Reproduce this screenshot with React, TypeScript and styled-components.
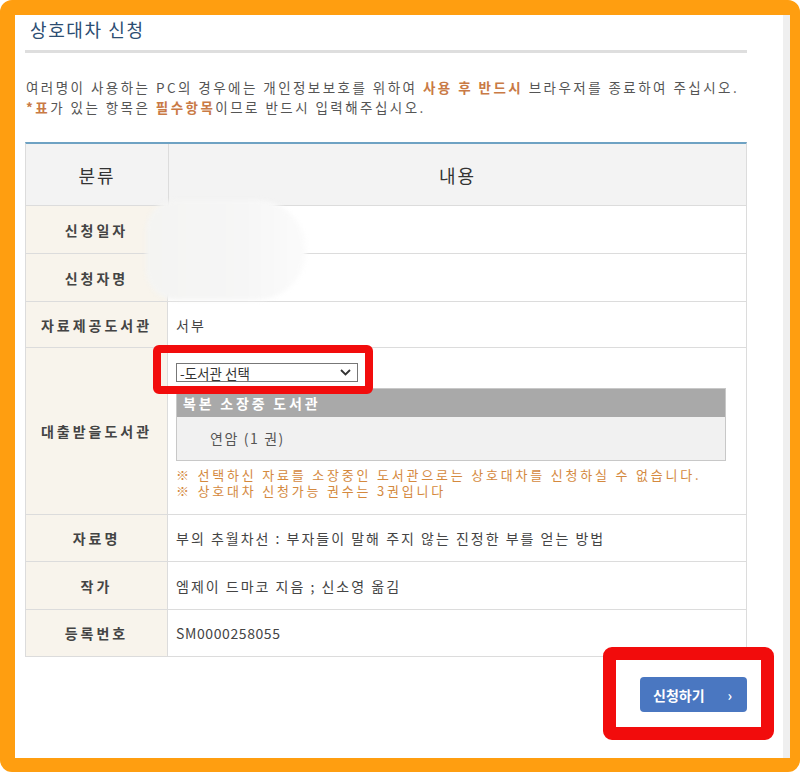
import React from "react";
import styled, { createGlobalStyle } from "styled-components";

const GlobalStyle = createGlobalStyle`
  html, body {
    margin: 0;
    padding: 0;
    background: #ffffff;
  }
  body {
    font-family: "Noto Sans CJK KR", "Noto Sans", sans-serif;
    color: #444;
  }
`;

const Canvas = styled.div`
  position: relative;
  width: 805px;
  height: 773px;
`;

const Frame = styled.div`
  box-sizing: border-box;
  width: 800px;
  height: 772px;
  border-style: solid;
  border-color: #ff9e10;
  border-width: 15px 10px 14px 15px;
  border-radius: 12px;
  display: flex;
  overflow: hidden;
`;

const Content = styled.div`
  flex: 1;
  padding-left: 10px;
  background: #fff;
`;

const ScrollTrack = styled.div`
  width: 7px;
  background: #efefef;
`;

const Main = styled.div`
  width: 722px;
`;

const Title = styled.h2`
  margin: 0;
  padding-left: 5px;
  height: 28px;
  line-height: 28px;
  font-size: 18px;
  font-weight: 400;
  letter-spacing: 1.6px;
  color: #2c4d72;
`;

const TitleBar = styled.div`
  margin-top: 7px;
  height: 3px;
  background: #dedede;
`;

const Notice = styled.p`
  margin: 24px 0 0 1px;
  font-size: 13.5px;
  line-height: 20px;
  letter-spacing: 2.45px;
  color: #555;
  white-space: nowrap;
`;

const Em = styled.b`
  color: #c97a45;
  font-weight: 700;
`;

const Table = styled.div`
  margin-top: 25px;
  width: 720px;
  border-top: 2px solid #6ea2c3;
  border-left: 1px solid #dcdcdc;
  border-right: 1px solid #dcdcdc;
`;

const Row = styled.div<{ $h: number }>`
  display: grid;
  grid-template-columns: 142px 1fr;
  height: ${(p) => p.$h}px;
  border-bottom: 1px solid #dcdcdc;
`;

const HeadCell = styled.div`
  display: flex;
  align-items: center;
  justify-content: center;
  background: #f3f3f3;
  font-size: 18px;
  color: #333;
  letter-spacing: 2px;
  & + & {
    border-left: 1px solid #dcdcdc;
  }
`;

const Label = styled.div`
  display: flex;
  align-items: center;
  justify-content: center;
  background: #f8f4ec;
  border-right: 1px solid #dcdcdc;
  font-size: 14px;
  font-weight: 700;
  letter-spacing: 3px;
  color: #444;
`;

const Value = styled.div<{ $code?: boolean }>`
  display: flex;
  align-items: center;
  padding-left: 8px;
  font-size: 14px;
  letter-spacing: ${(p) => (p.$code ? "0.6px" : "2px")};
  color: #444;
  white-space: nowrap;
`;

const PickCell = styled.div`
  padding: 15px 20px 0 8px;
`;

const Select = styled.div`
  box-sizing: border-box;
  width: 182px;
  height: 19px;
  border: 1px solid #777;
  display: flex;
  align-items: center;
  justify-content: space-between;
  padding: 0 6px 0 3px;
  font-size: 13.5px;
  color: #333;
  background: #fff;
`;

const Holdings = styled.div`
  margin-top: 6px;
  border: 1px solid #c8c8c8;
`;

const HoldingsHead = styled.div`
  height: 28px;
  line-height: 28px;
  background: #a9a9a9;
  color: #fff;
  font-weight: 700;
  font-size: 14px;
  letter-spacing: 2.8px;
  padding-left: 6px;
`;

const HoldingsBody = styled.div`
  height: 43px;
  line-height: 43px;
  background: #f1f1f1;
  padding-left: 33px;
  font-size: 14px;
  color: #555;
  letter-spacing: 1.6px;
`;

const Notes = styled.div`
  margin-top: 6px;
  font-size: 13px;
  line-height: 16px;
  letter-spacing: 2.8px;
  color: #d4893e;
  white-space: nowrap;
`;

const Actions = styled.div`
  display: flex;
  justify-content: flex-end;
  margin-top: 20px;
`;

const SubmitButton = styled.button`
  width: 107px;
  height: 35px;
  border: none;
  border-radius: 4px;
  background: #4a77c1;
  color: #fff;
  font-family: "Noto Sans CJK KR", sans-serif;
  font-size: 14px;
  font-weight: 700;
  display: flex;
  align-items: center;
  padding: 0 15px 0 13px;
  justify-content: space-between;
  cursor: pointer;
`;

const Mark = styled.div<{ $x: number; $y: number; $w: number; $h: number; $b: number }>`
  position: absolute;
  box-sizing: border-box;
  left: ${(p) => p.$x}px;
  top: ${(p) => p.$y}px;
  width: ${(p) => p.$w}px;
  height: ${(p) => p.$h}px;
  border: ${(p) => p.$b}px solid #f20c0c;
  border-radius: ${(p) => (p.$b > 10 ? 9 : 6)}px;
`;

const Blur = styled.div`
  position: absolute;
  left: 146px;
  top: 200px;
  width: 160px;
  height: 100px;
  border-radius: 30px 50px 50px 30px;
  background: linear-gradient(90deg, #f4f4f2 0%, #f6f6f6 60%, #fbfbfb 100%);
  filter: blur(2px);
`;

const Chevron = () => (
  <svg width="11" height="7" viewBox="0 0 11 7">
    <polyline points="1,1 5.5,5.5 10,1" fill="none" stroke="#333" strokeWidth="1.8" />
  </svg>
);

export default function App() {
  return (
    <Canvas>
      <GlobalStyle />
      <Frame>
        <Content>
          <Main>
            <Title>상호대차 신청</Title>
            <TitleBar />
            <Notice>
              여러명이 사용하는 PC의 경우에는 개인정보보호를 위하여 <Em>사용 후 반드시</Em> 브라우저를 종료하여 주십시오.
              <br />
              <Em>*표</Em>가 있는 항목은 <Em>필수항목</Em>이므로 반드시 입력해주십시오.
            </Notice>
            <Table>
              <Row $h={61}>
                <HeadCell>분류</HeadCell>
                <HeadCell>내용</HeadCell>
              </Row>
              <Row $h={47}>
                <Label>신청일자</Label>
                <Value />
              </Row>
              <Row $h={47}>
                <Label>신청자명</Label>
                <Value />
              </Row>
              <Row $h={45}>
                <Label>자료제공도서관</Label>
                <Value>서부</Value>
              </Row>
              <Row $h={166}>
                <Label>대출받을도서관</Label>
                <PickCell>
                  <Select>
                    <span>-도서관 선택</span>
                    <Chevron />
                  </Select>
                  <Holdings>
                    <HoldingsHead>복본 소장중 도서관</HoldingsHead>
                    <HoldingsBody>연암 (1 권)</HoldingsBody>
                  </Holdings>
                  <Notes>
                    ※ 선택하신 자료를 소장중인 도서관으로는 상호대차를 신청하실 수 없습니다.
                    <br />※ 상호대차 신청가능 권수는 3권입니다
                  </Notes>
                </PickCell>
              </Row>
              <Row $h={46}>
                <Label>자료명</Label>
                <Value>부의 추월차선 : 부자들이 말해 주지 않는 진정한 부를 얻는 방법</Value>
              </Row>
              <Row $h={47}>
                <Label>작가</Label>
                <Value>엠제이 드마코 지음 ; 신소영 옮김</Value>
              </Row>
              <Row $h={46}>
                <Label>등록번호</Label>
                <Value $code>SM0000258055</Value>
              </Row>
            </Table>
            <Actions>
              <SubmitButton>
                <span>신청하기</span>
                <span>›</span>
              </SubmitButton>
            </Actions>
          </Main>
        </Content>
        <ScrollTrack />
      </Frame>
      <Blur />
      <Mark $x={153} $y={345} $w={220} $h={49} $b={8} />
      <Mark $x={603} $y={647} $w={171} $h={93} $b={13} />
    </Canvas>
  );
}
